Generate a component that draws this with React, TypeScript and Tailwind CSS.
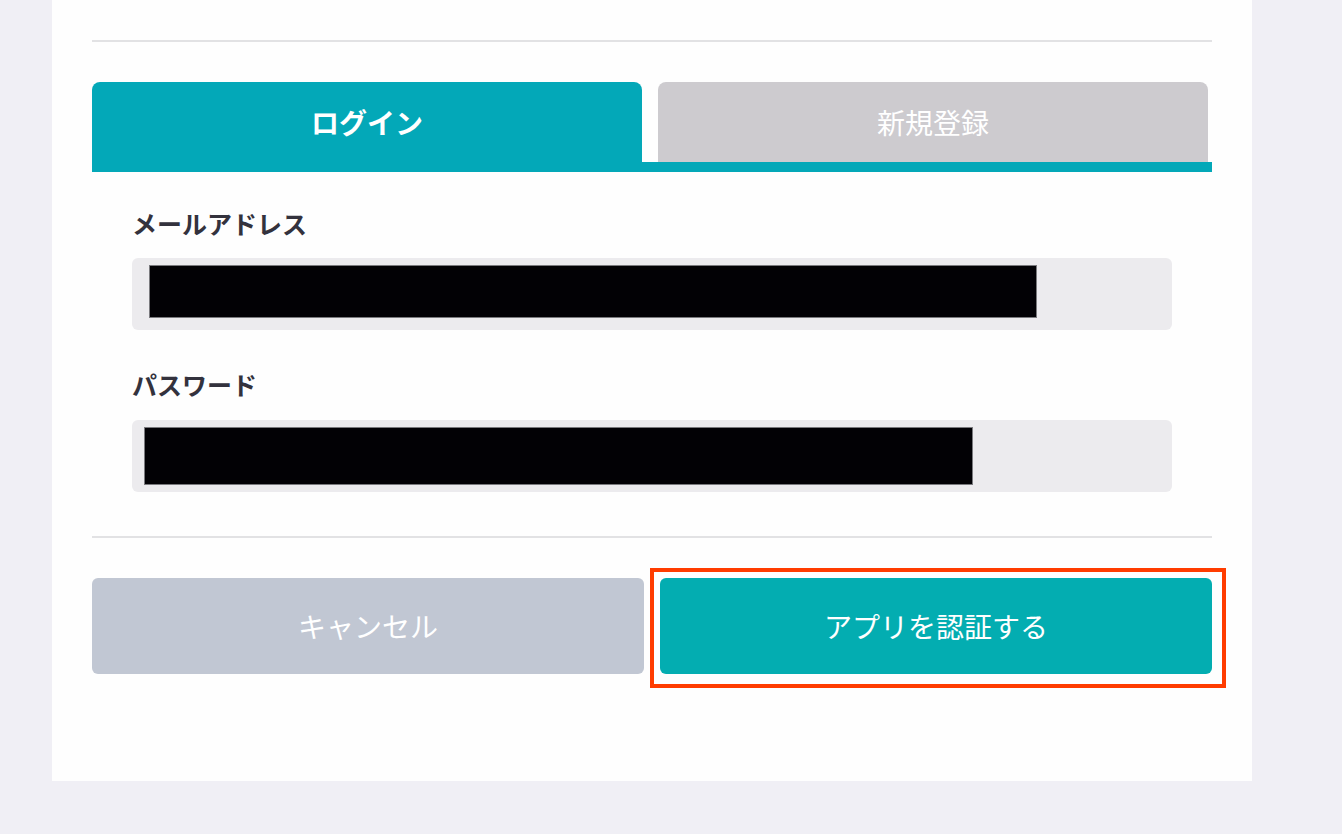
import React from "react";

export default function App() {
  const font = { fontFamily: '"Noto Sans CJK JP", "Noto Sans", sans-serif' };
  return (
    <div className="min-h-[834px] w-full bg-[#f0eff5]" style={font}>
      <div className="ml-[52px] w-[1200px] bg-[#fefefe] px-[40px] pt-[40px] pb-[107px]">
        <div className="h-[2px] bg-[#e2e2e4]" />

        <div className="mt-[40px]">
          <div className="flex gap-[16px]">
            <div className="flex h-[80px] w-[550px] items-center justify-center rounded-t-[8px] bg-[#03a8b8] text-[28px] font-bold text-white">
              ログイン
            </div>
            <div className="flex h-[80px] w-[550px] items-center justify-center rounded-t-[8px] bg-[#cdcbcf] text-[28px] text-white">
              新規登録
            </div>
          </div>
          <div className="h-[10px] bg-[#03a8b8]" />
        </div>

        <div className="px-[40px] pt-[35px]">
          <div className="h-[32px] text-[25px] font-bold leading-[32px] text-[#33323d]">
            メールアドレス
          </div>
          <div className="mt-[19px] flex h-[72px] items-start rounded-[6px] bg-[#ecebee] pl-[17px] pt-[7px]">
            <div className="h-[53px] w-[888px] border border-[#7a7a7e] bg-[#020105]" />
          </div>

          <div className="mt-[38px] h-[32px] text-[25px] font-bold leading-[32px] text-[#33323d]">
            パスワード
          </div>
          <div className="mt-[20px] flex h-[72px] items-start rounded-[6px] bg-[#ecebee] pl-[12px] pt-[7px]">
            <div className="h-[58px] w-[829px] border border-[#7a7a7e] bg-[#020105]" />
          </div>
        </div>

        <div className="mt-[44px] h-[2px] bg-[#e2e2e4]" />

        <div className="mt-[40px] flex gap-[16px]">
          <div className="flex h-[96px] w-[552px] items-center justify-center rounded-[6px] bg-[#c1c7d3] text-[28px] text-white">
            キャンセル
          </div>
          <div className="relative w-[552px]">
            <div className="flex h-[96px] w-full items-center justify-center rounded-[6px] bg-[#03adb1] text-[28px] text-white">
              アプリを認証する
            </div>
            <div className="pointer-events-none absolute -left-[10px] -right-[14px] -top-[10px] -bottom-[14px] border-[4px] border-[#ff3c00]" />
          </div>
        </div>
      </div>
    </div>
  );
}
